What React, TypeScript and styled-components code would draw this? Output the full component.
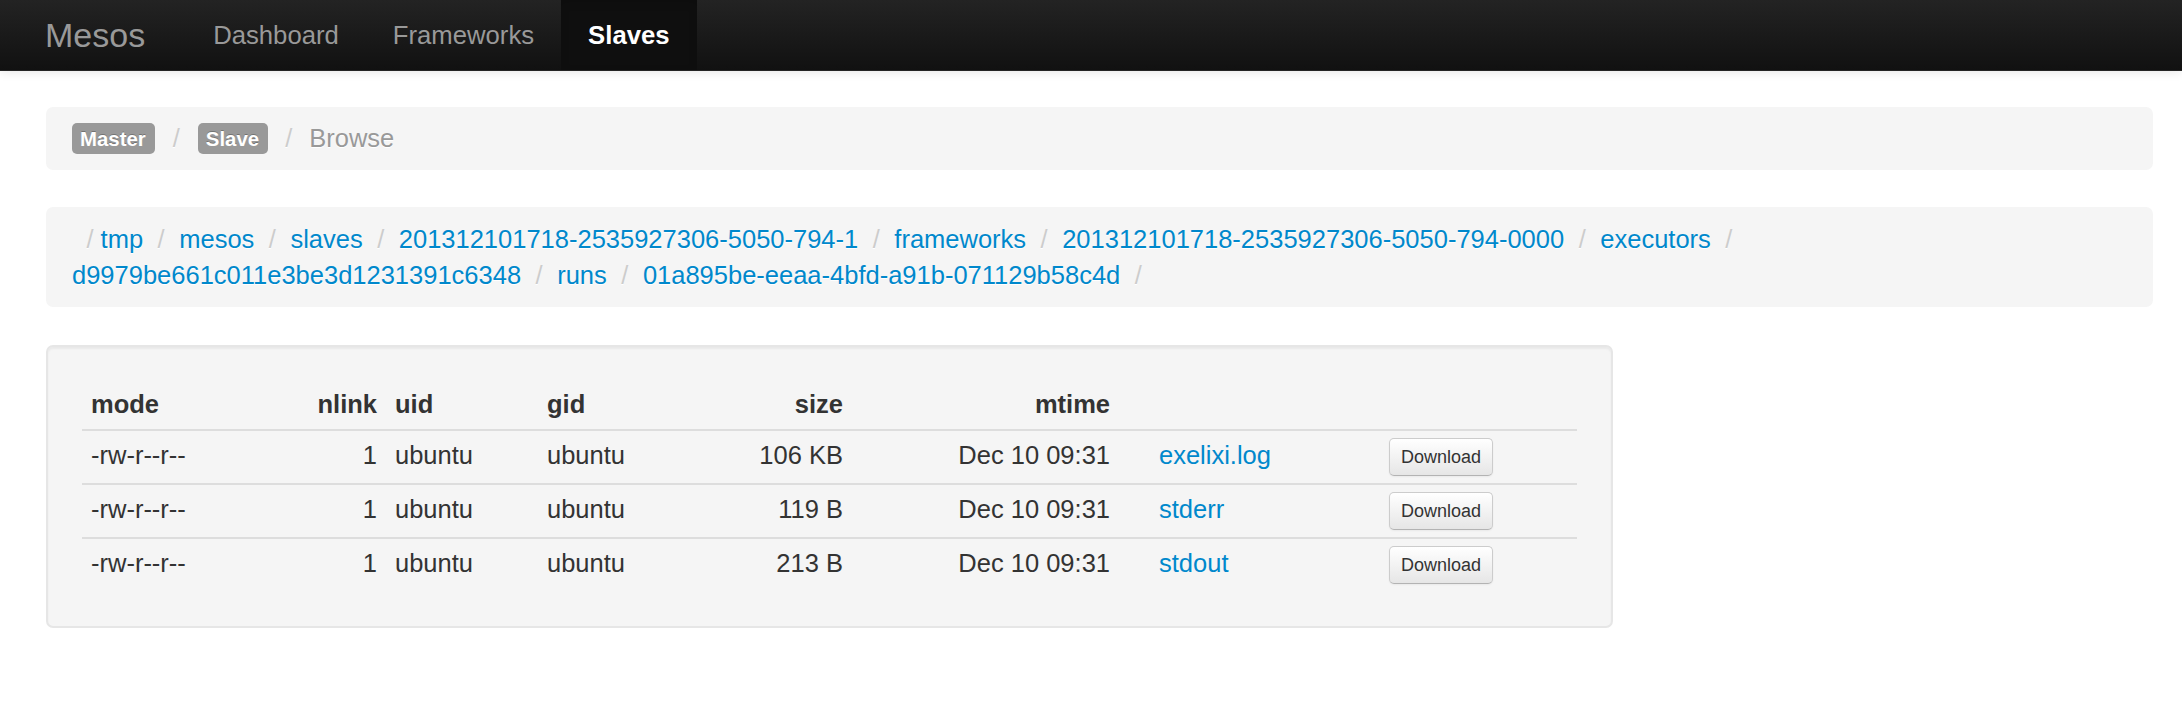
import React from "react";
import styled, { createGlobalStyle } from "styled-components";

const GlobalStyle = createGlobalStyle`
  html, body {
    margin: 0;
    padding: 0;
    background: #ffffff;
  }
  body {
    font-family: "Liberation Sans", Arial, Helvetica, sans-serif;
    font-size: 25.5px;
    line-height: 35px;
    color: #333333;
  }
`;

const Navbar = styled.div`
  height: 70px;
  display: flex;
  padding-left: 45px;
  background-image: linear-gradient(to bottom, #232323, #111111);
  border-bottom: 1px solid #252525;
  box-shadow: 0 1px 10px rgba(0, 0, 0, 0.1);
`;

const Brand = styled.a`
  display: block;
  padding-right: 41px;
  font-size: 34px;
  line-height: 70px;
  font-weight: 300;
  color: #999999;
  text-decoration: none;
`;

const NavList = styled.ul`
  display: flex;
  margin: 0;
  padding: 0;
  list-style: none;
`;

const NavLink = styled.a<{ $active?: boolean }>`
  display: block;
  padding: 0 27px;
  line-height: 70px;
  font-size: 25.7px;
  font-weight: ${(p) => (p.$active ? 700 : 400)};
  color: ${(p) => (p.$active ? "#ffffff" : "#999999")};
  background: ${(p) => (p.$active ? "#0f0f0f" : "transparent")};
  box-shadow: ${(p) =>
    p.$active ? "inset 0 3px 8px rgba(0, 0, 0, 0.125)" : "none"};
  text-decoration: none;
`;

const Content = styled.div`
  padding: 36px 29px 0 46px;
`;

const Breadcrumb = styled.ul<{ $lineHeight: number; $gap: number }>`
  display: flex;
  flex-wrap: wrap;
  align-items: center;
  column-gap: 7px;
  margin: 0 0 ${(p) => p.$gap}px;
  padding: 14px 26px;
  list-style: none;
  background: #f5f5f5;
  border-radius: 7px;
  line-height: ${(p) => p.$lineHeight}px;
`;

const Crumb = styled.li`
  display: flex;
  align-items: center;
  white-space: nowrap;
  text-shadow: 0 1px 0 #ffffff;
`;

const Divider = styled.span<{ $pad: number; $padRight?: number }>`
  margin-left: 7px;
  padding: 0 ${(p) => p.$padRight ?? p.$pad}px 0 ${(p) => p.$pad}px;
  color: #cccccc;
`;

const Label = styled.span`
  display: inline-block;
  padding: 3.5px 9px 3.5px 8px;
  font-size: 20.4px;
  line-height: 24px;
  font-weight: 700;
  color: #ffffff;
  background: #999999;
  border-radius: 5px;
  text-shadow: 0 -1px 0 rgba(0, 0, 0, 0.25);
`;

const Muted = styled.span`
  color: #999999;
`;

const Link = styled.a`
  color: #0088cc;
  text-decoration: none;
`;

const Well = styled.div`
  width: 74.36%;
  box-sizing: border-box;
  padding: 33px 34px 35px;
  background: #f5f5f5;
  border: 2px solid #e6e6e6;
  border-radius: 7px;
  box-shadow: inset 0 2px 2px rgba(0, 0, 0, 0.05);
`;

const Table = styled.table`
  width: 100%;
  table-layout: fixed;
  border-collapse: collapse;
  border-spacing: 0;
`;

const Th = styled.th<{ $right?: boolean; $padLeft?: number }>`
  padding: 7px 9px 7px ${(p) => p.$padLeft ?? 9}px;
  line-height: 35px;
  font-weight: 700;
  text-align: ${(p) => (p.$right ? "right" : "left")};
  vertical-align: top;
`;

const Td = styled.td<{ $right?: boolean; $padLeft?: number }>`
  padding: 7px 9px 7px ${(p) => p.$padLeft ?? 9}px;
  line-height: 35px;
  text-align: ${(p) => (p.$right ? "right" : "left")};
  vertical-align: top;
  border-top: 2px solid #dddddd;
  white-space: nowrap;
`;

const DownloadButton = styled.button`
  display: block;
  height: 38px;
  padding: 0 11px;
  font-family: "Liberation Sans", Arial, Helvetica, sans-serif;
  font-size: 18px;
  line-height: 36px;
  color: #333333;
  background-image: linear-gradient(to bottom, #ffffff, #e6e6e6);
  border: 1px solid #cccccc;
  border-bottom-color: #b3b3b3;
  border-radius: 5px;
  box-shadow: inset 0 1px 0 rgba(255, 255, 255, 0.2),
    0 1px 2px rgba(0, 0, 0, 0.05);
  cursor: pointer;
`;

const path = [
  "tmp",
  "mesos",
  "slaves",
  "201312101718-2535927306-5050-794-1",
  "frameworks",
  "201312101718-2535927306-5050-794-0000",
  "executors",
  "d9979be661c011e3be3d1231391c6348",
  "runs",
  "01a895be-eeaa-4bfd-a91b-071129b58c4d",
];

const files = [
  { mode: "-rw-r--r--", nlink: 1, uid: "ubuntu", gid: "ubuntu", size: "106 KB", mtime: "Dec 10 09:31", name: "exelixi.log" },
  { mode: "-rw-r--r--", nlink: 1, uid: "ubuntu", gid: "ubuntu", size: "119 B", mtime: "Dec 10 09:31", name: "stderr" },
  { mode: "-rw-r--r--", nlink: 1, uid: "ubuntu", gid: "ubuntu", size: "213 B", mtime: "Dec 10 09:31", name: "stdout" },
];

const App = () => {
  return (
    <>
      <GlobalStyle />
      <Navbar>
        <Brand href="#">Mesos</Brand>
        <NavList>
          <li>
            <NavLink href="#">Dashboard</NavLink>
          </li>
          <li>
            <NavLink href="#">Frameworks</NavLink>
          </li>
          <li>
            <NavLink href="#" $active>
              Slaves
            </NavLink>
          </li>
        </NavList>
      </Navbar>

      <Content>
        <Breadcrumb $lineHeight={35} $gap={37}>
          <Crumb>
            <Label>Master</Label>
            <Divider $pad={11}>/</Divider>
          </Crumb>
          <Crumb>
            <Label>Slave</Label>
            <Divider $pad={10}>/</Divider>
          </Crumb>
          <Crumb>
            <Muted>Browse</Muted>
          </Crumb>
        </Breadcrumb>

        <Breadcrumb $lineHeight={36} $gap={38}>
          <Crumb>
            <Divider $pad={7.5} $padRight={0}>
              /
            </Divider>
          </Crumb>
          {path.map((part) => (
            <Crumb key={part}>
              <Link href="#">{part}</Link>
              <Divider $pad={7.5}>/</Divider>
            </Crumb>
          ))}
        </Breadcrumb>

        <Well>
          <Table>
            <colgroup>
              <col style={{ width: 200 }} />
              <col style={{ width: 104 }} />
              <col style={{ width: 152 }} />
              <col style={{ width: 150 }} />
              <col style={{ width: 164 }} />
              <col style={{ width: 267 }} />
              <col style={{ width: 261 }} />
              <col />
            </colgroup>
            <thead>
              <tr>
                <Th>mode</Th>
                <Th $right>nlink</Th>
                <Th>uid</Th>
                <Th>gid</Th>
                <Th $right>size</Th>
                <Th $right>mtime</Th>
                <Th $padLeft={40}></Th>
                <Th></Th>
              </tr>
            </thead>
            <tbody>
              {files.map((f) => (
                <tr key={f.name}>
                  <Td>{f.mode}</Td>
                  <Td $right>{f.nlink}</Td>
                  <Td>{f.uid}</Td>
                  <Td>{f.gid}</Td>
                  <Td $right>{f.size}</Td>
                  <Td $right>{f.mtime}</Td>
                  <Td $padLeft={40}>
                    <Link href="#">{f.name}</Link>
                  </Td>
                  <Td>
                    <DownloadButton>Download</DownloadButton>
                  </Td>
                </tr>
              ))}
            </tbody>
          </Table>
        </Well>
      </Content>
    </>
  );
};

export default App;
